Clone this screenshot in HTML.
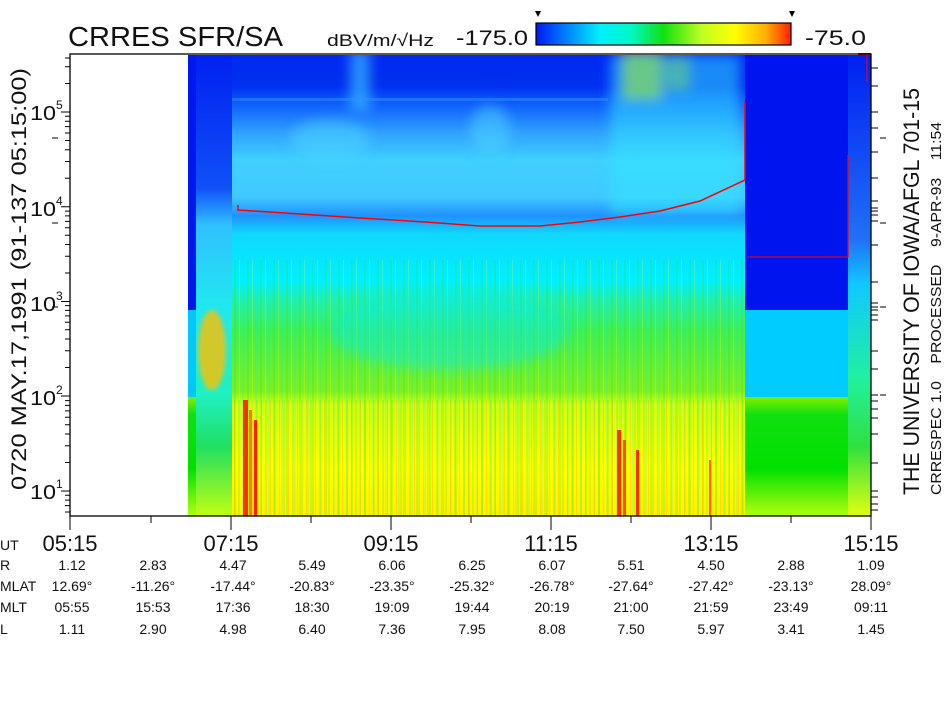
<!DOCTYPE html>
<html><head><meta charset="utf-8"><style>
html,body{margin:0;padding:0;background:#fff;width:945px;height:720px;overflow:hidden}
svg{display:block}
text{font-family:"Liberation Sans",sans-serif;fill:#111}
</style></head><body>
<svg width="945" height="720" viewBox="0 0 945 720" xmlns="http://www.w3.org/2000/svg">
<defs>
<filter id="bl" x="-20%" y="-20%" width="140%" height="140%"><feGaussianBlur stdDeviation="6"/></filter>
<filter id="bl2" x="-20%" y="-20%" width="140%" height="140%"><feGaussianBlur stdDeviation="2"/></filter>
<linearGradient id="cb" x1="0" x2="1" y1="0" y2="0">
<stop offset="0" stop-color="#0018f0"/><stop offset="0.1" stop-color="#0070ff"/><stop offset="0.25" stop-color="#00f0ff"/><stop offset="0.38" stop-color="#00f8c0"/><stop offset="0.5" stop-color="#10e010"/><stop offset="0.65" stop-color="#c0ff20"/><stop offset="0.78" stop-color="#ffff00"/><stop offset="0.9" stop-color="#ffb000"/><stop offset="1" stop-color="#ff2000"/>
</linearGradient>
<linearGradient id="main" x1="0" x2="0" y1="54" y2="516" gradientUnits="userSpaceOnUse">
<stop offset="0" stop-color="#0028f0"/>
<stop offset="0.07" stop-color="#0030f0"/>
<stop offset="0.11" stop-color="#1060ff"/>
<stop offset="0.17" stop-color="#30a0ff"/>
<stop offset="0.23" stop-color="#40d0ff"/>
<stop offset="0.31" stop-color="#40c8ff"/>
<stop offset="0.35" stop-color="#2090ff"/>
<stop offset="0.39" stop-color="#10d8ff"/>
<stop offset="0.49" stop-color="#00f0ff"/>
<stop offset="0.53" stop-color="#20f0b0"/>
<stop offset="0.6" stop-color="#40f050"/>
<stop offset="0.73" stop-color="#80f020"/>
<stop offset="0.76" stop-color="#d0ff10"/>
<stop offset="0.9" stop-color="#ffff00"/>
<stop offset="1" stop-color="#fff000"/>
</linearGradient>
<linearGradient id="grn" x1="0" x2="0" y1="397" y2="516" gradientUnits="userSpaceOnUse">
<stop offset="0" stop-color="#80f000"/><stop offset="0.15" stop-color="#10e010"/><stop offset="0.6" stop-color="#00e000"/><stop offset="1" stop-color="#b0ff10"/>
</linearGradient>
<linearGradient id="lcol" x1="0" x2="0" y1="54" y2="516" gradientUnits="userSpaceOnUse">
<stop offset="0" stop-color="#0020f0"/><stop offset="0.29" stop-color="#1050f8"/><stop offset="0.37" stop-color="#30c0ff"/><stop offset="0.55" stop-color="#20e8f0"/><stop offset="0.74" stop-color="#20f0c0"/><stop offset="0.85" stop-color="#20e060"/><stop offset="1" stop-color="#c0ff10"/>
</linearGradient>
<linearGradient id="rcol" x1="0" x2="0" y1="54" y2="516" gradientUnits="userSpaceOnUse">
<stop offset="0" stop-color="#0020f0"/><stop offset="0.4" stop-color="#2070f8"/><stop offset="0.5" stop-color="#10c8ff"/><stop offset="0.7" stop-color="#20f0a0"/><stop offset="0.85" stop-color="#30e040"/><stop offset="1" stop-color="#e0ff10"/>
</linearGradient>
<pattern id="stripes" x="0" y="0" width="13" height="10" patternUnits="userSpaceOnUse">
<rect x="0" y="0" width="2" height="10" fill="#20e020" opacity="0.2"/>
<rect x="5" y="0" width="1" height="10" fill="#ffff00" opacity="0.2"/>
<rect x="8" y="0" width="2" height="10" fill="#00e0ff" opacity="0.15"/>
</pattern>
<pattern id="stripes2" x="0" y="0" width="9" height="10" patternUnits="userSpaceOnUse">
<rect x="0" y="0" width="1" height="10" fill="#ff9000" opacity="0.25"/>
<rect x="4" y="0" width="2" height="10" fill="#40e020" opacity="0.2"/>
</pattern>
</defs>

<!-- header -->
<text x="68" y="46" font-size="28" textLength="215" lengthAdjust="spacingAndGlyphs">CRRES SFR/SA</text>
<text x="327" y="46" font-size="17" textLength="107" lengthAdjust="spacingAndGlyphs">dBV/m/√Hz</text>
<text x="456" y="45" font-size="21" textLength="72" lengthAdjust="spacingAndGlyphs">-175.0</text>
<rect x="536" y="23" width="255" height="22" fill="url(#cb)" stroke="#000" stroke-width="1.2"/>
<text x="805" y="45" font-size="21" textLength="61" lengthAdjust="spacingAndGlyphs">-75.0</text>
<path d="M535,11 h6 l-3,6z M789,11 h6 l-3,6z" fill="#000"/>

<!-- spectrogram -->
<svg x="188" y="55" width="683" height="461" viewBox="188 55 683 461" overflow="hidden">
<rect x="188" y="55" width="683" height="461" fill="url(#main)"/>
<rect x="232" y="260" width="513" height="256" fill="url(#stripes)"/>
<rect x="232" y="400" width="513" height="116" fill="url(#stripes2)"/>
<g filter="url(#bl)">
<rect x="610" y="55" width="130" height="160" fill="#30e8ff" opacity="0.5"/>
<rect x="622" y="50" width="40" height="50" fill="#a0f040" opacity="0.6"/>
<rect x="665" y="55" width="25" height="35" fill="#90f050" opacity="0.4"/>
<rect x="350" y="50" width="20" height="60" fill="#40d0ff" opacity="0.6"/>
<ellipse cx="330" cy="140" rx="40" ry="20" fill="#50d8ff" opacity="0.5"/>
<ellipse cx="490" cy="130" rx="20" ry="25" fill="#50d8ff" opacity="0.5"/>
<ellipse cx="450" cy="330" rx="120" ry="40" fill="#00e8ff" opacity="0.4"/>
</g>
<rect x="188" y="98" width="420" height="3" fill="#3090ff" opacity="0.5"/>
<rect x="188" y="55" width="8" height="255" fill="#0018f0"/>
<rect x="188" y="310" width="8" height="87" fill="#00c8ff"/>
<rect x="188" y="397" width="8" height="119" fill="url(#grn)"/>
<rect x="196" y="55" width="36" height="461" fill="url(#lcol)"/>
<ellipse cx="212" cy="350" rx="14" ry="40" fill="#ffc000" opacity="0.8" filter="url(#bl2)"/>
<rect x="243" y="400" width="5" height="116" fill="#ff3000"/>
<rect x="249" y="410" width="3" height="106" fill="#ff6000" opacity="0.8"/>
<rect x="254" y="420" width="3" height="96" fill="#ff2000"/>
<rect x="617" y="430" width="4" height="86" fill="#ff3000"/>
<rect x="623" y="440" width="3" height="76" fill="#ff5000"/>
<rect x="636" y="450" width="3" height="66" fill="#ff3000"/>
<rect x="709" y="460" width="2" height="56" fill="#ff6000"/>
<rect x="745" y="55" width="103" height="255" fill="#0014f0"/>
<rect x="745" y="310" width="103" height="87" fill="#00ccff"/>
<rect x="745" y="397" width="103" height="119" fill="url(#grn)"/>
<rect x="848" y="55" width="23" height="461" fill="url(#rcol)"/>
</svg>
<polyline points="238,205 238,210 300,214 360,218 425,222 480,226 540,226 580,222 620,217 660,211 700,201 745,180 745,102" fill="none" stroke="#ff0000" stroke-width="1.5"/>
<line x1="747" y1="257" x2="848" y2="257" stroke="#ff0000" stroke-width="1"/>
<line x1="848" y1="155" x2="848" y2="257" stroke="#ff0000" stroke-width="1.2"/>
<line x1="858" y1="54" x2="871" y2="54" stroke="#ff0000" stroke-width="2"/>
<line x1="867" y1="54" x2="867" y2="82" stroke="#ff0000" stroke-width="1"/>

<!-- frame -->
<rect x="70" y="54" width="801" height="462" fill="none" stroke="#000" stroke-width="1.3"/>
<path d="M70,491h-9M70,396h-9M70,301.5h-9M70,206.75h-9M70,112h-9
M70,462.5h-5M70,445.8h-5M70,434h-5M70,424.8h-5M70,417.3h-5M70,410.9h-5M70,405.4h-5M70,400.6h-5
M70,367.5h-5M70,350.8h-5M70,339h-5M70,329.8h-5M70,322.3h-5M70,315.9h-5M70,310.4h-5M70,305.6h-5
M70,273h-5M70,256.3h-5M70,244.5h-5M70,235.3h-5M70,227.8h-5M70,221.4h-5M70,215.9h-5M70,211.1h-5
M70,178.3h-5M70,161.5h-5M70,149.8h-5M70,140.5h-5M70,133h-5M70,126.6h-5M70,121.2h-5M70,116.3h-5
M70,83.5h-5M70,66.8h-5M70,58h-5M70,512h-5M70,505.6h-5M70,500.1h-5M70,495.3h-5
M52,138h6M52,223h6M52,307h6" stroke="#000" stroke-width="1" fill="none"/>
<path d="M871,68h7M871,86h7M871,112h7M871,128h7M871,152h7M871,178h7M871,201h7M871,208h7M871,211h7M871,215h7M871,221h7M871,245h7M871,282h7M871,303h7M871,307h7M871,310h7M871,315h7M871,320h7M871,351h7M871,369h7M871,395h7M871,401h7M871,409h7M871,418h7M871,434h7M871,463h7M871,491h7M871,497h7M871,504h7M871,510h7
M880,138h6M880,223h6M880,307h6M880,395h6" stroke="#000" stroke-width="1" fill="none"/>
<path d="M70,516v14M231,516v14M391,516v14M551,516v14M711,516v14M871,516v14M151,516v7M311,516v7M471,516v7M631,516v7M791,516v7" stroke="#000" stroke-width="1"/>

<g font-size="20">
<text x="30" y="120" textLength="26" lengthAdjust="spacingAndGlyphs">10</text><text x="56" y="109" font-size="12">5</text>
<text x="30" y="216" textLength="26" lengthAdjust="spacingAndGlyphs">10</text><text x="56" y="205" font-size="12">4</text>
<text x="30" y="311" textLength="26" lengthAdjust="spacingAndGlyphs">10</text><text x="56" y="300" font-size="12">3</text>
<text x="30" y="405" textLength="26" lengthAdjust="spacingAndGlyphs">10</text><text x="56" y="394" font-size="12">2</text>
<text x="30" y="499" textLength="26" lengthAdjust="spacingAndGlyphs">10</text><text x="56" y="488" font-size="12">1</text>
</g>
<text transform="translate(26,490) rotate(-90)" font-size="21" textLength="422" lengthAdjust="spacingAndGlyphs">0720  MAY.17,1991  (91-137 05:15:00)</text>
<text transform="translate(919,495) rotate(-90)" font-size="22" textLength="407" lengthAdjust="spacingAndGlyphs">THE UNIVERSITY OF IOWA/AFGL 701-15</text>
<text transform="translate(941,495) rotate(-90)" font-size="15" textLength="373" lengthAdjust="spacingAndGlyphs" xml:space="preserve">CRRESPEC 1.0    PROCESSED    9-APR-93    11:54</text>

<text x="0" y="550" font-size="14">UT</text>
<g font-size="22" text-anchor="middle">
<text x="70" y="551">05:15</text><text x="231" y="551">07:15</text><text x="391" y="551">09:15</text><text x="551" y="551">11:15</text><text x="711" y="551">13:15</text><text x="871" y="551">15:15</text>
</g>
<g font-size="14">
<text x="0" y="570">R</text><text x="0" y="591">MLAT</text><text x="0" y="612">MLT</text><text x="0" y="634">L</text>
</g>
<g font-size="14" text-anchor="middle">
<text x="72" y="570">1.12</text><text x="153" y="570">2.83</text><text x="233" y="570">4.47</text><text x="312" y="570">5.49</text><text x="392" y="570">6.06</text><text x="472" y="570">6.25</text><text x="552" y="570">6.07</text><text x="631" y="570">5.51</text><text x="711" y="570">4.50</text><text x="791" y="570">2.88</text><text x="871" y="570">1.09</text>
<text x="72" y="591">12.69°</text><text x="153" y="591">-11.26°</text><text x="233" y="591">-17.44°</text><text x="312" y="591">-20.83°</text><text x="392" y="591">-23.35°</text><text x="472" y="591">-25.32°</text><text x="552" y="591">-26.78°</text><text x="631" y="591">-27.64°</text><text x="711" y="591">-27.42°</text><text x="791" y="591">-23.13°</text><text x="871" y="591">28.09°</text>
<text x="72" y="612">05:55</text><text x="153" y="612">15:53</text><text x="233" y="612">17:36</text><text x="312" y="612">18:30</text><text x="392" y="612">19:09</text><text x="472" y="612">19:44</text><text x="552" y="612">20:19</text><text x="631" y="612">21:00</text><text x="711" y="612">21:59</text><text x="791" y="612">23:49</text><text x="871" y="612">09:11</text>
<text x="72" y="634">1.11</text><text x="153" y="634">2.90</text><text x="233" y="634">4.98</text><text x="312" y="634">6.40</text><text x="392" y="634">7.36</text><text x="472" y="634">7.95</text><text x="552" y="634">8.08</text><text x="631" y="634">7.50</text><text x="711" y="634">5.97</text><text x="791" y="634">3.41</text><text x="871" y="634">1.45</text>
</g>
</svg>
</body></html>
